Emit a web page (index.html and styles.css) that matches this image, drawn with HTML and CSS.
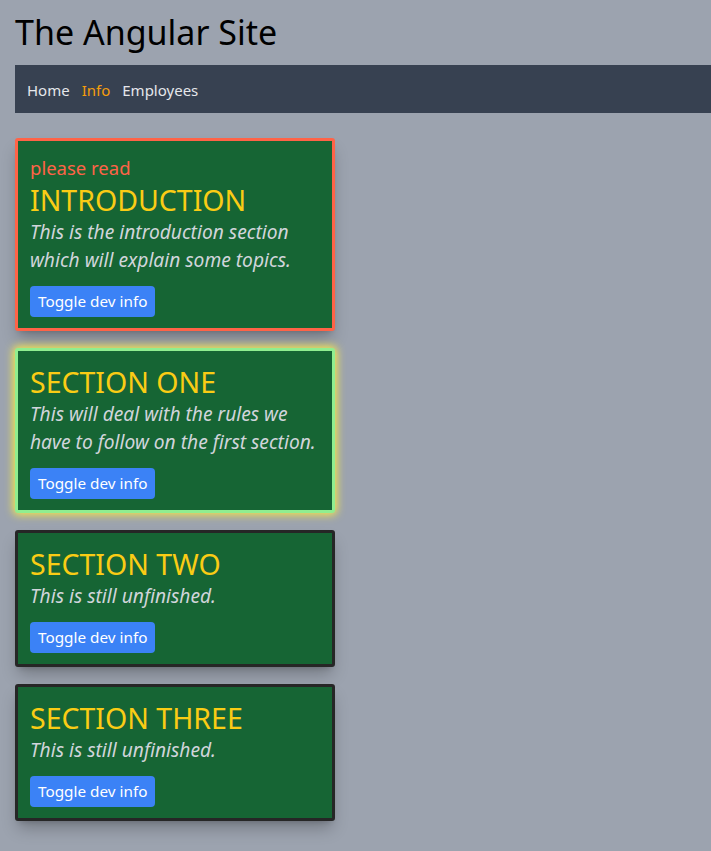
FILE: index.html
```html
<!DOCTYPE html>
<html lang="en">
<head>
<meta charset="utf-8">
<title>The Angular Site</title>
<link rel="stylesheet" href="styles.css">
</head>
<body>
<div class="page">
  <h1 class="site-title">The Angular Site</h1>
  <nav class="navbar">
    <a class="nav-link" href="#">Home</a>
    <a class="nav-link active" href="#">Info</a>
    <a class="nav-link" href="#">Employees</a>
  </nav>
  <main class="sections">
    <section class="card card-intro">
      <p class="note">please read</p>
      <h2 class="card-title">INTRODUCTION</h2>
      <p class="card-text">This is the introduction section which will explain some topics.</p>
      <button class="btn">Toggle dev info</button>
    </section>
    <section class="card card-one">
      <h2 class="card-title">SECTION ONE</h2>
      <p class="card-text">This will deal with the rules we have to follow on the first section.</p>
      <button class="btn">Toggle dev info</button>
    </section>
    <section class="card card-plain">
      <h2 class="card-title">SECTION TWO</h2>
      <p class="card-text">This is still unfinished.</p>
      <button class="btn">Toggle dev info</button>
    </section>
    <section class="card card-plain">
      <h2 class="card-title">SECTION THREE</h2>
      <p class="card-text">This is still unfinished.</p>
      <button class="btn">Toggle dev info</button>
    </section>
  </main>
</div>
</body>
</html>
```
FILE: styles.css
```css
* { box-sizing: border-box; }
html, body { margin: 0; padding: 0; }
body {
  background: #9ca3af;
  font-family: "Noto Sans", "Open Sans", sans-serif;
  color: #000;
  min-height: 851px;
}
.page {
  padding: 12px 0 0 15px;
}
.site-title {
  margin: 0;
  font-size: 34px;
  line-height: 40px;
  font-weight: 400;
}
.navbar {
  margin-top: 13px;
  height: 48px;
  background: #374151;
  display: flex;
  align-items: center;
  gap: 12px;
  padding-left: 12px;
}
.nav-link {
  color: #e5e7eb;
  text-decoration: none;
  font-size: 15px;
  line-height: 24px;
  position: relative;
  top: 1px;
}
.nav-link.active { color: #f59e0b; }
.sections {
  display: flex;
  flex-direction: column;
  gap: 17px;
  padding-top: 25px;
  padding-bottom: 30px;
}
.card {
  width: 320px;
  background: #166534;
  border: 3px solid #262626;
  border-radius: 3px;
  padding: 13px 12px 11px;
  box-shadow: 0 10px 15px -3px rgba(0,0,0,0.25), 0 4px 6px -4px rgba(0,0,0,0.2);
}
.card-intro { border-color: #ff6347; }
.card-one {
  border-color: #90ee90;
  box-shadow: 0 0 9px 2px rgba(250, 235, 70, 0.95);
}
.note {
  margin: 0;
  color: #ff6347;
  font-size: 18.5px;
  line-height: 28px;
}
.card-title {
  margin: 0;
  color: #facc15;
  font-size: 28.5px;
  line-height: 36px;
  font-weight: 400;
}
.card-text {
  margin: 0;
  color: #d1d5db;
  font-style: italic;
  font-size: 19.2px;
  line-height: 28px;
}
.btn {
  margin-top: 12px;
  display: block;
  background: #3b82f6;
  color: #fff;
  border: 0;
  border-radius: 4px;
  padding: 4px 8px;
  font-family: inherit;
  font-size: 15.3px;
  line-height: 23px;
}
```
